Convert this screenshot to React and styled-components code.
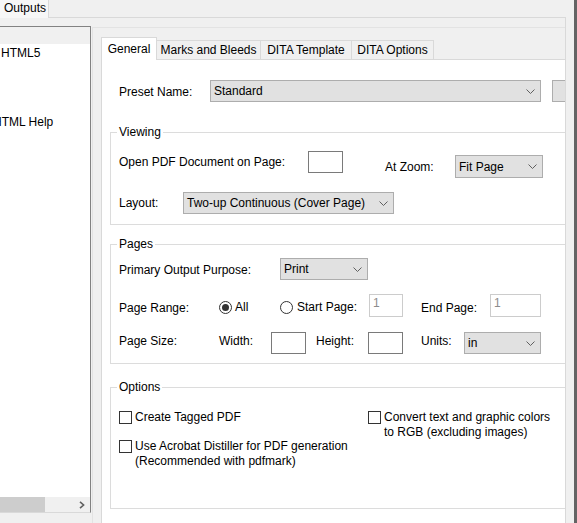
import styled, { createGlobalStyle } from "styled-components";

const GlobalStyle = createGlobalStyle`
  html, body {
    margin: 0;
    padding: 0;
  }
  body {
    background: #f0f0f0;
    font-family: "Liberation Sans", Arial, sans-serif;
    font-size: 12px;
    color: #000;
  }
`;

const Screen = styled.div`
  display: flex;
  width: 577px;
  height: 523px;
  overflow: hidden;
`;

const Workspace = styled.div`
  width: 566px;
  display: flex;
  flex-direction: column;
`;

const WindowEdge = styled.div`
  width: 3px;
  margin-left: auto;
  background: #646464;
`;

const TopTabs = styled.div`
  display: flex;
  height: 17px;
`;

const TopTab = styled.div`
  position: relative;
  z-index: 1;
  box-sizing: border-box;
  width: 49px;
  height: 18px;
  margin-bottom: -1px;
  padding-left: 4px;
  line-height: 16px;
  background: #f7f7f7;
  border-right: 1px solid #d9d9d9;
`;

const OuterPage = styled.div`
  flex: 1;
  display: flex;
  align-items: flex-start;
  border-top: 1px solid #d9d9d9;
  border-right: 1px solid #d9d9d9;
  overflow: hidden;
`;

/* left list of outputs */
const ListBox = styled.div`
  flex: 0 0 91px;
  box-sizing: border-box;
  height: 487px;
  margin-top: 8px;
  display: flex;
  flex-direction: column;
  background: #fff;
  border-top: 1px solid #828282;
  border-right: 1px solid #828282;
  border-bottom: 1px solid #d9d9d9;
  overflow: hidden;
`;

const ListHeader = styled.div`
  height: 17px;
  background: #f0f0f0;
`;

const ListItem = styled.div`
  height: 17px;
  line-height: 17px;
  margin-top: ${(p) => p.$gap || 0}px;
  padding-left: 1px;
  text-indent: ${(p) => p.$indent || 0}px;
  white-space: nowrap;
`;

const HScroll = styled.div`
  margin-top: auto;
  height: 15px;
  display: flex;
  align-items: center;
  background: #f0f0f0;
`;

const Thumb = styled.div`
  width: 45px;
  height: 15px;
  background: #cdcdcd;
`;

const ScrollArrow = styled.div`
  margin-left: auto;
  width: 17px;
  height: 15px;
  display: flex;
  align-items: center;
  justify-content: center;
`;

/* right side: tab control */
const RightPane = styled.div`
  flex: 1;
  align-self: stretch;
  margin: 9px 0 0 1px;
  padding: 9px 0 0 8px;
  border-top: 1px solid #e3e3e3;
  border-left: 1px solid #e3e3e3;
`;

const TabStrip = styled.div`
  display: flex;
  align-items: flex-end;
  height: 22px;
`;

const Tab = styled.div`
  position: relative;
  z-index: ${(p) => (p.$active ? 2 : 1)};
  box-sizing: border-box;
  width: ${(p) => p.$w}px;
  height: ${(p) => (p.$active ? 23 : 19)}px;
  margin-left: ${(p) => (p.$first ? 0 : -1)}px;
  margin-bottom: ${(p) => (p.$active ? -1 : 0)}px;
  display: flex;
  align-items: center;
  justify-content: center;
  padding-bottom: ${(p) => (p.$active ? 1 : 0)}px;
  background: ${(p) => (p.$active ? "#fff" : "#f0f0f0")};
  border: 1px solid #d9d9d9;
  border-bottom: none;
  white-space: nowrap;
`;

const TabPage = styled.div`
  box-sizing: border-box;
  width: 480px;
  min-height: 480px;
  background: #fff;
  border: 1px solid #d9d9d9;
`;

const PresetRow = styled.div`
  display: flex;
  align-items: center;
  height: 22px;
  margin-top: 20px;
  padding-left: 17px;
`;

const Row = styled.div`
  display: flex;
  align-items: ${(p) => p.$align || "center"};
  height: ${(p) => p.$h}px;
  margin-top: ${(p) => p.$mt || 0}px;
`;

const Field = styled.div`
  display: flex;
  align-items: center;
  margin-top: ${(p) => p.$mt || 0}px;
  margin-left: ${(p) => p.$ml || 0}px;
`;

/* $dy nudges the text's centre down (positive) or up (negative) */
const Label = styled.span`
  flex: none;
  box-sizing: border-box;
  width: ${(p) => p.$w}px;
  margin-left: ${(p) => p.$ml || 0}px;
  padding-top: ${(p) => (p.$dy > 0 ? p.$dy * 2 : 0)}px;
  padding-bottom: ${(p) => (p.$dy < 0 ? -p.$dy * 2 : 0)}px;
  white-space: nowrap;
`;

const ComboBox = styled.div`
  flex: none;
  box-sizing: border-box;
  width: ${(p) => p.$w}px;
  height: ${(p) => p.$h || 22}px;
  display: flex;
  align-items: center;
  padding-left: 3px;
  background: #e1e1e1;
  border: 1px solid #adadad;
  white-space: nowrap;
`;

const ComboArrow = styled.span`
  margin-left: auto;
  width: 20px;
  display: flex;
  justify-content: center;
`;

const SideButton = styled.div`
  flex: none;
  box-sizing: border-box;
  width: 40px;
  height: 22px;
  margin-left: 11px;
  background: #e1e1e1;
  border: 1px solid #adadad;
`;

const TextBox = styled.div`
  flex: none;
  box-sizing: border-box;
  width: ${(p) => p.$w}px;
  height: ${(p) => p.$h || 22}px;
  padding: 1px 3px;
  line-height: 14px;
  background: #fff;
  color: #8c8c8c;
  border: 1px solid ${(p) => (p.$disabled ? "#cccccc" : "#7a7a7a")};
`;

const Group = styled.fieldset`
  box-sizing: border-box;
  width: 470px;
  min-width: 0;
  margin: ${(p) => p.$mt}px 0 0 8px;
  padding: 0;
  border: 1px solid #dcdcdc;
`;

const Legend = styled.legend`
  margin-left: 6px;
  padding: 0 2px;
  line-height: 14px;
  font-size: 12px;
`;

const GroupBody = styled.div`
  padding: ${(p) => p.$pad};
`;

const RadioItem = styled.div`
  flex: none;
  display: flex;
  align-items: center;
  width: ${(p) => p.$w}px;
  padding-top: 3px;
  white-space: nowrap;
`;

const RadioCircle = styled.span`
  flex: none;
  box-sizing: border-box;
  width: 13px;
  height: 13px;
  margin-right: ${(p) => p.$gap}px;
  display: flex;
  align-items: center;
  justify-content: center;
  border: 1px solid #333;
  border-radius: 50%;
  background: #fff;
`;

const RadioDot = styled.span`
  width: 7px;
  height: 7px;
  border-radius: 50%;
  background: #333;
`;

const Columns = styled.div`
  display: flex;
`;

const Column = styled.div`
  width: ${(p) => p.$w || "auto"};
  flex: none;
`;

const CheckItem = styled.div`
  display: flex;
  align-items: flex-start;
  line-height: 15px;
  margin-top: ${(p) => p.$mt || 0}px;
  white-space: nowrap;
`;

const CheckBox = styled.span`
  flex: none;
  box-sizing: border-box;
  width: 13px;
  height: 13px;
  margin: 1px 3px 0 0;
  border: 1px solid #333;
  background: #fff;
`;

function Chevron() {
  return (
    <svg width="9" height="5" viewBox="0 0 9 5">
      <polyline points="0.5,0.5 4.5,4.5 8.5,0.5" fill="none" stroke="#606060" strokeWidth="1" />
    </svg>
  );
}

function Combo({ w, h, children }) {
  return (
    <ComboBox $w={w} $h={h}>
      {children}
      <ComboArrow>
        <Chevron />
      </ComboArrow>
    </ComboBox>
  );
}

function Radio({ checked, w, gap, children }) {
  return (
    <RadioItem $w={w}>
      <RadioCircle $gap={gap}>{checked && <RadioDot />}</RadioCircle>
      {children}
    </RadioItem>
  );
}

function Check({ mt, children }) {
  return (
    <CheckItem $mt={mt}>
      <CheckBox />
      <span>{children}</span>
    </CheckItem>
  );
}

const tabs = [
  { label: "General", w: 56, active: true },
  { label: "Marks and Bleeds", w: 105 },
  { label: "DITA Template", w: 92 },
  { label: "DITA Options", w: 83 },
];

export default function App() {
  return (
    <>
      <GlobalStyle />
      <Screen>
        <Workspace>
          <TopTabs>
            <TopTab>Outputs</TopTab>
          </TopTabs>
          <OuterPage>
            <ListBox>
              <ListHeader />
              <ListItem $gap={1}>HTML5</ListItem>
              <ListItem $gap={52} $indent={-8}>
                HTML Help
              </ListItem>
              <HScroll>
                <Thumb />
                <ScrollArrow>
                  <svg width="6" height="8" viewBox="0 0 6 8">
                    <polyline points="1,0.8 4.6,4 1,7.2" fill="none" stroke="#606060" strokeWidth="1.6" />
                  </svg>
                </ScrollArrow>
              </HScroll>
            </ListBox>

            <RightPane>
              <TabStrip>
                {tabs.map((t, i) => (
                  <Tab key={t.label} $w={t.w} $active={t.active} $first={i === 0}>
                    {t.label}
                  </Tab>
                ))}
              </TabStrip>
              <TabPage>
                <PresetRow>
                  <Label $w={91} $dy={1}>
                    Preset Name:
                  </Label>
                  <Combo w={331}>Standard</Combo>
                  <SideButton />
                </PresetRow>

                <Group $mt={23}>
                  <Legend>Viewing</Legend>
                  <GroupBody $pad="12px 0 10px 8px">
                    <Row $h={27} $align="flex-start">
                      <Field>
                        <Label $w={189}>Open PDF Document on Page:</Label>
                        <TextBox $w={35} />
                      </Field>
                      <Field $mt={4} $ml={42}>
                        <Label $w={70}>At Zoom:</Label>
                        <Combo w={88} h={23}>
                          Fit Page
                        </Combo>
                      </Field>
                    </Row>
                    <Row $h={22} $mt={14}>
                      <Label $w={64}>Layout:</Label>
                      <Combo w={211}>Two-up Continuous (Cover Page)</Combo>
                    </Row>
                  </GroupBody>
                </Group>

                <Group $mt={12}>
                  <Legend>Pages</Legend>
                  <GroupBody $pad="7px 0 9px 8px">
                    <Row $h={22}>
                      <Label $w={161} $dy={1}>
                        Primary Output Purpose:
                      </Label>
                      <Combo w={88}>Print</Combo>
                    </Row>
                    <Row $h={23} $mt={14}>
                      <Label $w={100} $dy={2}>
                        Page Range:
                      </Label>
                      <Radio checked w={61} gap={3}>
                        All
                      </Radio>
                      <Radio w={89} gap={4}>
                        Start Page:
                      </Radio>
                      <TextBox $w={34} $h={23} $disabled>
                        1
                      </TextBox>
                      <Label $w={69} $ml={18} $dy={2}>
                        End Page:
                      </Label>
                      <TextBox $w={51} $h={23} $disabled>
                        1
                      </TextBox>
                    </Row>
                    <Row $h={22} $mt={15}>
                      <Label $w={100} $dy={-2}>
                        Page Size:
                      </Label>
                      <Label $w={52} $dy={-2}>
                        Width:
                      </Label>
                      <TextBox $w={35} />
                      <Label $w={52} $ml={10} $dy={-2}>
                        Height:
                      </Label>
                      <TextBox $w={35} />
                      <Label $w={43} $ml={18} $dy={-2}>
                        Units:
                      </Label>
                      <Combo w={77}>in</Combo>
                    </Row>
                  </GroupBody>
                </Group>

                <Group $mt={16}>
                  <Legend>Options</Legend>
                  <GroupBody $pad="16px 0 39px 8px">
                    <Columns>
                      <Column $w="249px">
                        <Check>Create Tagged PDF</Check>
                        <Check mt={14}>
                          Use Acrobat Distiller for PDF generation
                          <br />
                          (Recommended with pdfmark)
                        </Check>
                      </Column>
                      <Column>
                        <Check>
                          Convert text and graphic colors
                          <br />
                          to RGB (excluding images)
                        </Check>
                      </Column>
                    </Columns>
                  </GroupBody>
                </Group>
              </TabPage>
            </RightPane>
          </OuterPage>
        </Workspace>
        <WindowEdge />
      </Screen>
    </>
  );
}
